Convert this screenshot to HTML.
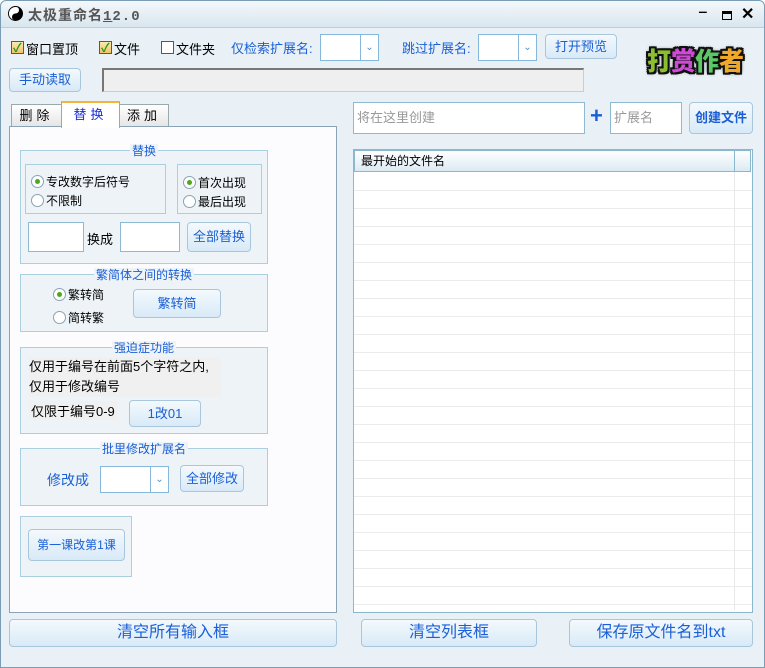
<!DOCTYPE html>
<html><head><meta charset="utf-8"><style>
*{box-sizing:border-box;margin:0;padding:0}
body{width:765px;height:668px;overflow:hidden;font-family:"Liberation Sans","Noto Sans CJK SC",sans-serif;font-size:13px;background:#fff}
.win{position:absolute;left:0;top:0;width:765px;height:668px;background:#e9f1f6;box-shadow:inset 0 0 0 1px #7a9cb4;border-radius:6px 6px 0 0}
.tb{position:absolute;left:1px;top:1px;width:763px;height:27px;background:linear-gradient(#f4f8fb,#d9e6ef);border-bottom:1px solid #b9cfdf;border-radius:6px 6px 0 0}
.a{position:absolute}
.blue{color:#1a5fd6}
.btn{position:absolute;background:linear-gradient(#f4f9fd,#d8eaf7);border:1px solid #a9c7dc;border-radius:4px;color:#1a5fd6;text-align:center}
.inp{position:absolute;background:#fff;border:1px solid #8dbad0}
.grp{position:absolute;background:#edf3f7;border:1px solid #a9cfe0}
.gt{position:absolute;top:-9px;left:0;right:0;text-align:center;font-size:12px;color:#1a5fd6}
.gt span{background:#edf3f7;padding:0 2px}
.cb{position:absolute;width:13px;height:13px;border:1px solid #556;background:linear-gradient(#fbe9b0,#f2c36c)}
.rb{position:absolute;width:13px;height:13px;border:1px solid #8aa2b4;border-radius:50%;background:#fff}
.rb.on::after{content:"";position:absolute;left:3px;top:3px;width:5px;height:5px;border-radius:50%;background:#4da81c}
.combo{position:absolute;background:#fff;border:1px solid #86b8dc}
.combo .ar{position:absolute;right:0;top:0;bottom:0;width:18px;border-left:1px solid #86b8dc;color:#5a8fc5;font-size:10px;text-align:center}
.logo span{text-shadow:-2px 0 #111,2px 0 #111,0 -2px #111,0 2px #111,-2px -2px #111,2px 2px #111,-2px 2px #111,2px -2px #111,0 0 4px #000}
</style></head><body>
<div class="win">
<div class="tb">
 <svg class="a" style="left:7px;top:5px" width="15" height="15" viewBox="0 0 16 16"><circle cx="8" cy="8" r="7.5" fill="#fff" stroke="#000"/><path d="M8 .5a7.5 7.5 0 0 1 0 15a3.75 3.75 0 0 1 0-7.5a3.75 3.75 0 0 0 0-7.5z" fill="#000"/><circle cx="8" cy="4.25" r="1.2" fill="#fff"/><circle cx="8" cy="11.75" r="1.2" fill="#000"/></svg>
 <div class="a" style="left:27px;top:4px;font-size:14px;font-weight:bold;color:#555;letter-spacing:1px;font-family:'Liberation Mono','Noto Sans CJK SC',monospace">太极重命名<u>1</u>2.0</div>
 <div class="a" style="left:698px;top:2px;font-size:14px;font-weight:bold;color:#000">‒</div>
 <div class="a" style="left:721px;top:10px;width:10px;height:9px;border:1.5px solid #000;border-top-width:3px"></div>
 <div class="a" style="left:740px;top:3px;font-size:16px;font-weight:bold;color:#000">✕</div>
</div>
<div class="cb" style="left:11px;top:41px"><span style="position:absolute;left:1px;top:-3px;color:#2a9a1a;font-size:12px;font-weight:bold">✓</span></div>
<div class="a" style="left:26px;top:39px">窗口置顶</div>
<div class="cb" style="left:99px;top:41px"><span style="position:absolute;left:1px;top:-3px;color:#2a9a1a;font-size:12px;font-weight:bold">✓</span></div>
<div class="a" style="left:114px;top:39px">文件</div>
<div class="cb" style="left:161px;top:41px;background:#fff"></div>
<div class="a" style="left:176px;top:39px">文件夹</div>
<div class="a blue" style="left:231px;top:38px">仅检索扩展名:</div>
<div class="combo" style="left:320px;top:34px;width:59px;height:27px"><div class="ar" style="line-height:25px">⌄</div></div>
<div class="a blue" style="left:402px;top:38px">跳过扩展名:</div>
<div class="combo" style="left:478px;top:34px;width:59px;height:27px"><div class="ar" style="line-height:25px">⌄</div></div>
<div class="btn" style="left:545px;top:34px;width:72px;height:25px;line-height:23px">打开预览</div>
<div class="a logo" style="left:647px;top:43px;font-size:25px;font-weight:900;letter-spacing:-1px;line-height:34px;font-family:'Noto Sans CJK SC',sans-serif"><span style="color:#8ac030">打</span><span style="color:#d04ad8">赏</span><span style="color:#5cc865">作</span><span style="color:#f0a828">者</span></div>
<div class="btn" style="left:9px;top:68px;width:72px;height:24px;line-height:22px">手动读取</div>
<div class="a" style="left:102px;top:68px;width:482px;height:24px;background:#efefef;border:1px solid #ccc;border-top:2px solid #777;border-left:2px solid #777"></div>
<div class="a" style="left:11px;top:104px;width:51px;height:23px;background:linear-gradient(#fff,#e6e6e6);border:1px solid #9aa;text-align:center;line-height:21px;letter-spacing:4px">删除</div>
<div class="a" style="left:61px;top:101px;width:59px;height:27px;background:#fff;border:1px solid #9aa;border-top:2px solid #f2b43a;border-bottom:none;text-align:center;line-height:24px;color:#1a2fd6;letter-spacing:4px;z-index:2">替换</div>
<div class="a" style="left:119px;top:104px;width:50px;height:23px;background:linear-gradient(#fff,#e6e6e6);border:1px solid #9aa;text-align:center;line-height:21px;letter-spacing:4px">添加</div>
<div class="a" style="left:9px;top:126px;width:328px;height:487px;background:#fcfcfe;border:1px solid #8aa3b6"></div>
<div class="grp" style="left:20px;top:150px;width:248px;height:114px"><div class="gt"><span>替换</span></div></div>
<div class="grp" style="left:25px;top:164px;width:141px;height:50px"></div>
<div class="rb on" style="left:31px;top:175px"></div><div class="a" style="left:46px;top:173px;font-size:12px">专改数字后符号</div>
<div class="rb" style="left:31px;top:194px"></div><div class="a" style="left:46px;top:192px;font-size:12px">不限制</div>
<div class="grp" style="left:177px;top:164px;width:85px;height:50px"></div>
<div class="rb on" style="left:183px;top:176px"></div><div class="a" style="left:198px;top:174px;font-size:12px">首次出现</div>
<div class="rb" style="left:183px;top:195px"></div><div class="a" style="left:198px;top:193px;font-size:12px">最后出现</div>
<div class="inp" style="left:28px;top:222px;width:56px;height:30px"></div>
<div class="a" style="left:87px;top:229px">换成</div>
<div class="inp" style="left:120px;top:222px;width:60px;height:30px"></div>
<div class="btn" style="left:187px;top:222px;width:64px;height:30px;line-height:28px">全部替换</div>
<div class="grp" style="left:20px;top:274px;width:248px;height:58px"><div class="gt"><span>繁简体之间的转换</span></div></div>
<div class="rb on" style="left:53px;top:288px"></div><div class="a" style="left:68px;top:286px;font-size:12px">繁转简</div>
<div class="rb" style="left:53px;top:311px"></div><div class="a" style="left:68px;top:309px;font-size:12px">简转繁</div>
<div class="btn" style="left:133px;top:289px;width:88px;height:29px;line-height:27px">繁转简</div>
<div class="grp" style="left:20px;top:347px;width:248px;height:87px"><div class="gt"><span>强迫症功能</span></div></div>
<div class="a" style="left:29px;top:357px;width:192px;height:40px;background:#f0f0f0;line-height:20px">仅用于编号在前面5个字符之内,<br>仅用于修改编号</div>
<div class="a" style="left:29px;top:401px;background:#f0f0f0;padding:0 2px">仅限于编号0-9</div>
<div class="btn" style="left:129px;top:400px;width:72px;height:27px;line-height:25px">1改01</div>
<div class="grp" style="left:20px;top:448px;width:248px;height:58px"><div class="gt"><span>批里修改扩展名</span></div></div>
<div class="a blue" style="left:47px;top:470px;font-size:14px">修改成</div>
<div class="combo" style="left:100px;top:466px;width:69px;height:27px"><div class="ar" style="line-height:25px">⌄</div></div>
<div class="btn" style="left:180px;top:465px;width:64px;height:27px;line-height:25px">全部修改</div>
<div class="grp" style="left:20px;top:516px;width:112px;height:61px"></div>
<div class="btn" style="left:28px;top:529px;width:97px;height:32px;line-height:30px;font-size:12px">第一课改第1课</div>
<div class="inp" style="left:353px;top:102px;width:232px;height:32px;color:#999;padding-left:3px;line-height:30px">将在这里创建</div>
<div class="a" style="left:590px;top:103px;font-size:22px;font-weight:bold;color:#1a5fd6">+</div>
<div class="inp" style="left:610px;top:102px;width:72px;height:32px;color:#999;padding-left:3px;line-height:30px">扩展名</div>
<div class="btn" style="left:689px;top:102px;width:64px;height:32px;line-height:30px;font-weight:bold">创建文件</div>
<div class="a" style="left:353px;top:149px;width:400px;height:464px;background:#fff;border:1px solid #8ab8cc;
background-image:repeating-linear-gradient(#fff 0 17px,#ececec 17px 18px);background-position:0 23px;background-repeat:repeat-y"></div>
<div class="a" style="left:354px;top:150px;width:397px;height:22px;background:linear-gradient(#fff,#dceaf3);border:1px solid #8ab8cc;padding-left:6px;line-height:20px;font-size:12px">最开始的文件名</div>
<div class="a" style="left:734px;top:150px;width:1px;height:460px;background:#e8e8e8"></div>
<div class="a" style="left:734px;top:150px;width:1px;height:22px;background:#8ab8cc"></div>
<div class="btn" style="left:9px;top:619px;width:328px;height:28px;line-height:26px;font-size:16px">清空所有输入框</div>
<div class="btn" style="left:361px;top:619px;width:176px;height:28px;line-height:26px;font-size:16px">清空列表框</div>
<div class="btn" style="left:569px;top:619px;width:184px;height:28px;line-height:26px;font-size:16px">保存原文件名到txt</div>
</div>
</body></html>
